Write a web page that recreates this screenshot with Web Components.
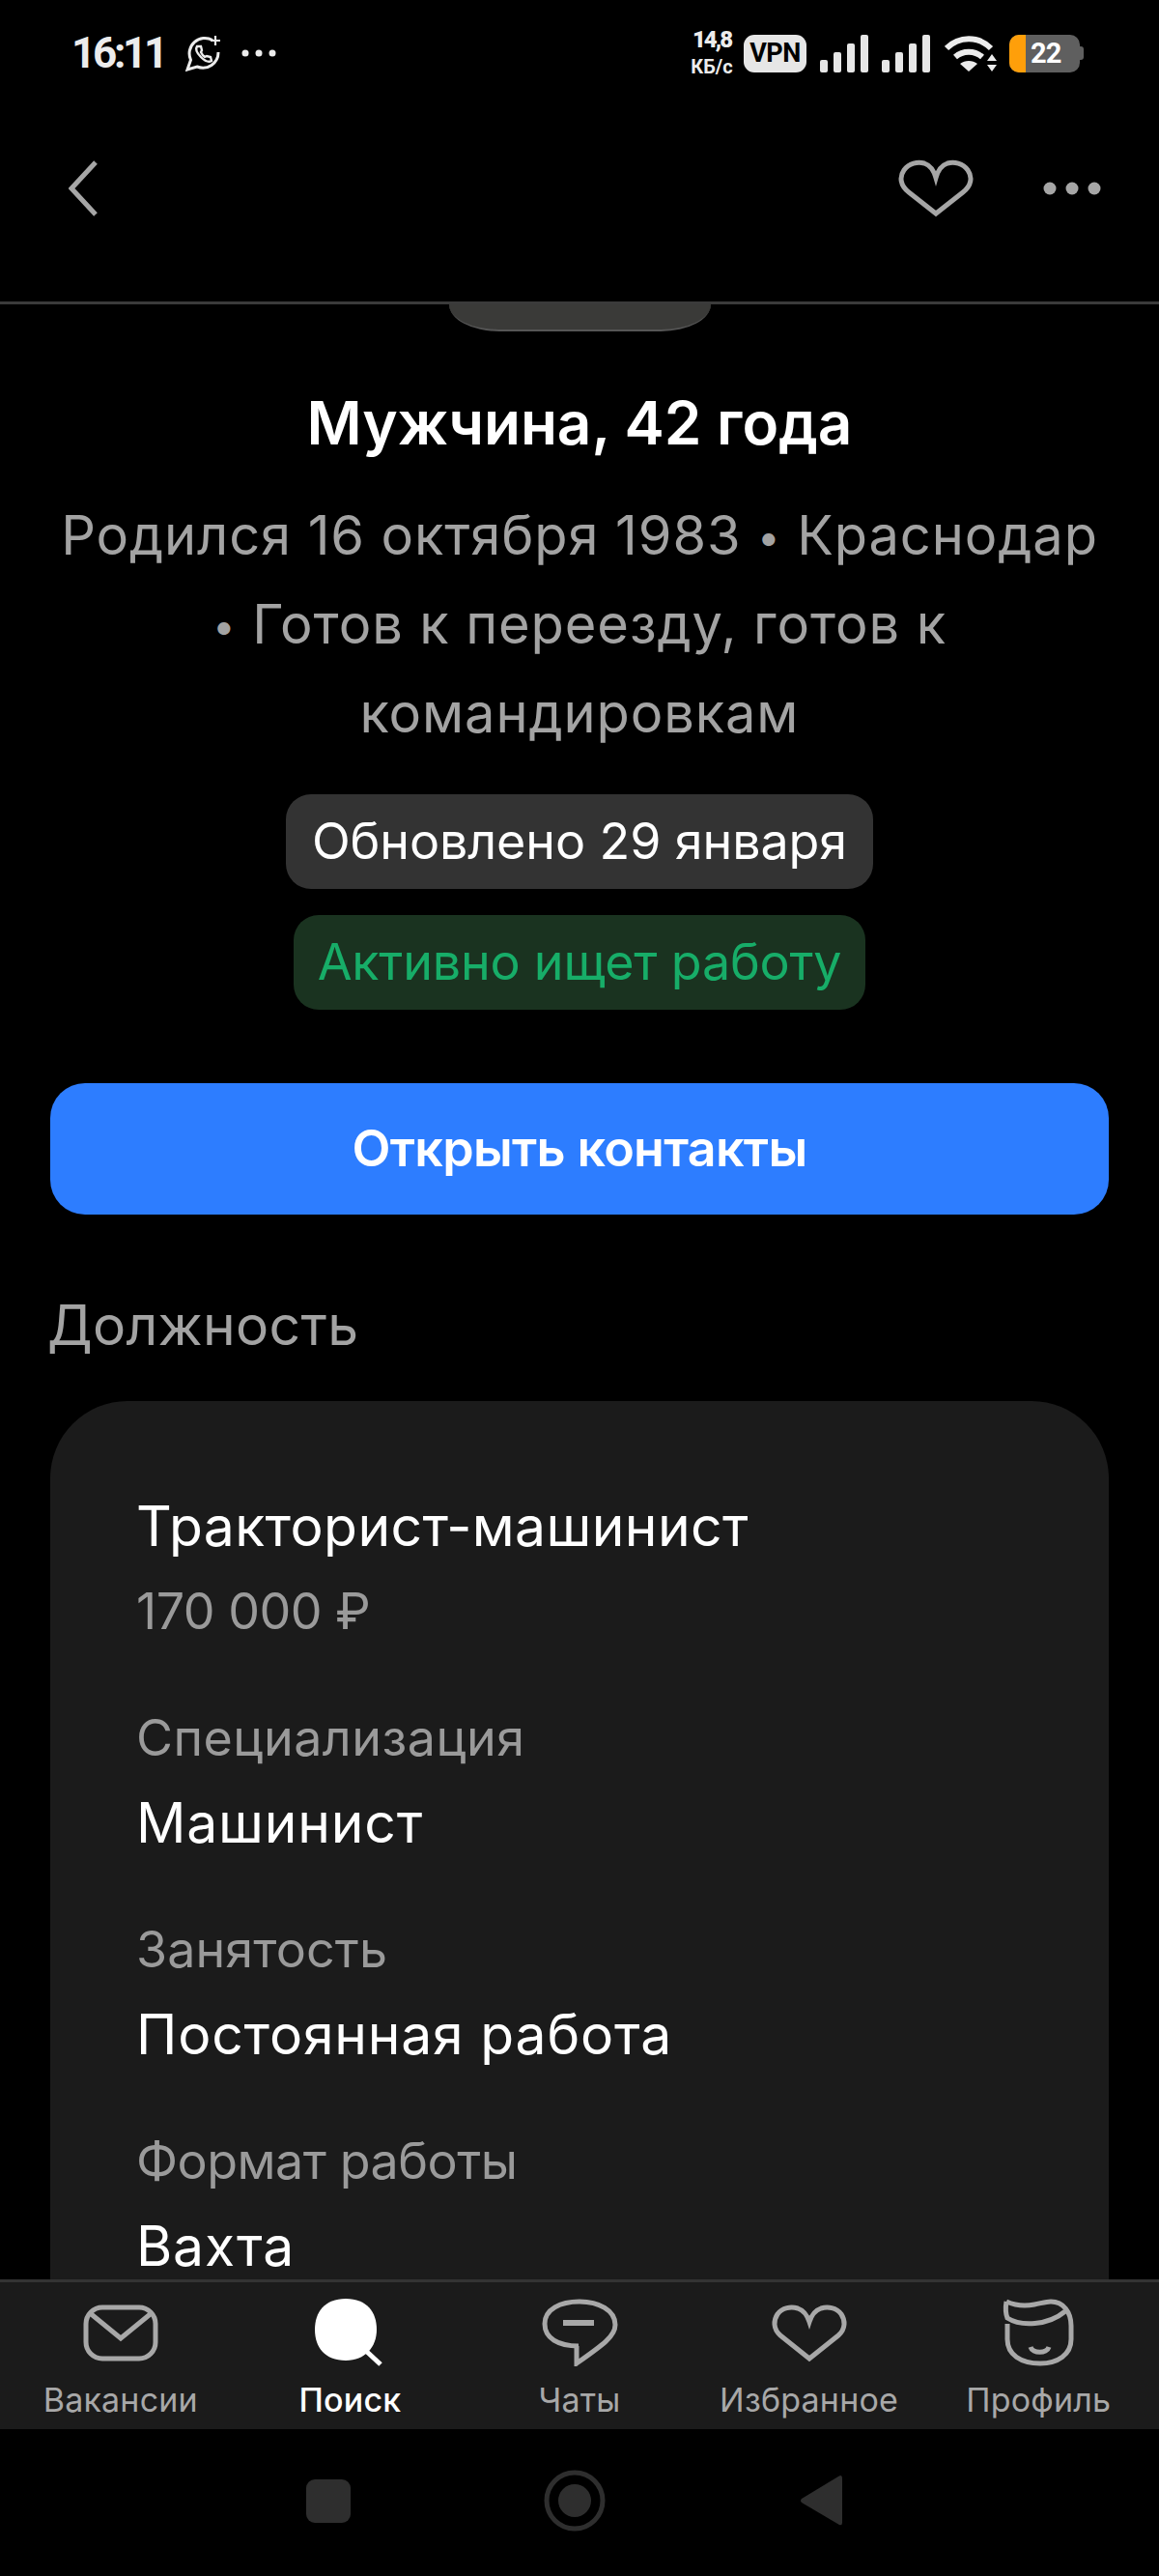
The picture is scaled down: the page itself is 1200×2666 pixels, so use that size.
<!DOCTYPE html>
<html lang="ru">
<head>
<meta charset="utf-8">
<title>Резюме</title>
<style>
html, body { margin: 0; background: #000; }
body { width: 1200px; height: 2666px; overflow: hidden; display: flex; flex-direction: column; font-family: Inter, "Noto Sans", sans-serif; color: #fff; }
.dot { font-size: 42px; vertical-align: 3px; }
</style>
</head>
<body>
<status-bar></status-bar>
<top-bar></top-bar>
<resume-view>
  <h-title>Мужчина, 42 года</h-title>
  <sub-text>Родился 16 октября 1983 <span class="dot">•</span> Краснодар<br><span class="dot">•</span> Готов к переезду, готов к<br>командировкам</sub-text>
  <tag-chip>Обновлено 29 января</tag-chip>
  <tag-chip kind="green">Активно ищет работу</tag-chip>
  <main-button>Открыть контакты</main-button>
  <section-card heading="Должность">
    <info-row first label="Тракторист-машинист" value="170 000 ₽"></info-row>
    <info-row style="--label-ls:.5px" label="Специализация" value="Машинист"></info-row>
    <info-row label="Занятость" value="Постоянная работа"></info-row>
    <info-row style="--label-ls:-.5px" label="Формат работы" value="Вахта"></info-row>
  </section-card>
</resume-view>
<tab-bar>
  <tab-item label="Вакансии" icon="mail"></tab-item>
  <tab-item label="Поиск" icon="search" active></tab-item>
  <tab-item label="Чаты" icon="chat"></tab-item>
  <tab-item label="Избранное" icon="heart"></tab-item>
  <tab-item label="Профиль" icon="face"></tab-item>
</tab-bar>
<system-nav></system-nav>

<script>
const SIGNAL_BARS = `<rect x="0" y="26" width="8" height="13" rx="2"/><rect x="14" y="18" width="8" height="21" rx="2"/><rect x="28" y="9" width="8" height="30" rx="2"/><rect x="42" y="0" width="8" height="39" rx="2"/>`;

class StatusBar extends HTMLElement {
    constructor() {
        super();
        this.attachShadow({ mode: 'open' });
        this.shadowRoot.innerHTML = `
            <style>
                :host { display: flex; align-items: center; height: 110px; padding: 0 78px 0 74px; color: #ececec; font-family: Roboto, sans-serif; flex: none; }
                .time { font-size: 44px; font-weight: 700; letter-spacing: -3.3px; width: 118px; }
                .speed { margin-left: auto; width: 46px; text-align: center; font-size: 20px; font-weight: 700; line-height: 27px; margin-right: 10px; white-space: nowrap; }
                .speed b { font-size: 24px; letter-spacing: -2px; }
                .vpn { width: 65px; height: 39px; border-radius: 11px; background: #e6e6e6; color: #000; font-size: 27px; font-weight: 700; display: flex; align-items: center; justify-content: center; letter-spacing: -.5px; margin-right: 14px; }
                .batt { position: relative; width: 73px; height: 39px; border-radius: 10px; background: #5f5f5f; overflow: hidden; display: flex; align-items: center; font-size: 29px; font-weight: 700; color: #fff; letter-spacing: -1px; }
                .batt i { width: 17px; align-self: stretch; background: #ff9f0a; margin-right: 5px; }
                .nub { width: 4px; height: 14px; background: #5f5f5f; border-radius: 0 3px 3px 0; }
                svg { display: block; flex: none; }
            </style>
            <span class="time">16:11</span>
            <svg width="38" height="38" viewBox="0 0 38 38" fill="none" stroke="#ececec" stroke-width="3">
                <path d="M28 5.5A16 16 0 0 0 5.5 26L2 36l10-3A16 16 0 0 0 34 18"/>
                <path d="M12 12c-2 3 0 7 4 11s8 6 11 4l-1-4-4-1-2 1c-2-1-3-3-4-5l1-2-1-4z" stroke-width="2.4"/>
                <path d="M31 1v10M26 6h10" stroke-width="2.2"/>
            </svg>
            <svg style="margin-left:20px" width="36" height="8" viewBox="0 0 36 8" fill="#ececec"><circle cx="4" cy="4" r="3.5"/><circle cx="18" cy="4" r="3.5"/><circle cx="32" cy="4" r="3.5"/></svg>
            <div class="speed"><b>14,8</b><br>КБ/с</div>
            <div class="vpn">VPN</div>
            <svg width="50" height="39" viewBox="0 0 50 39" fill="#e6e6e6">${SIGNAL_BARS}</svg>
            <svg style="margin-left:14px" width="50" height="39" viewBox="0 0 50 39" fill="#e6e6e6">${SIGNAL_BARS}</svg>
            <svg style="margin:0 13px 0 15px" width="54" height="39" viewBox="0 0 54 39" fill="none" stroke="#ececec" stroke-width="6">
                <path d="M2 14C15 1 35 1 48 14"/><path d="M11 23c8-7 20-7 28 0"/>
                <path d="M25 38l-9-8c5-4 13-4 18 0z" fill="#ececec" stroke="none"/>
                <path d="M49 20l5 7H44zM49 38l5-7H44z" fill="#ececec" stroke="none"/>
            </svg>
            <div class="batt"><i></i>22</div><div class="nub"></div>
        `;
    }
}

class TopBar extends HTMLElement {
    constructor() {
        super();
        this.attachShadow({ mode: 'open' });
        this.shadowRoot.innerHTML = `
            <style>
                :host { display: flex; align-items: center; height: 169px; border-bottom: 3px solid #3b3b3b; padding: 0 60px 33px 71px; flex: none; }
                svg { display: block; }
                .back { margin-right: auto; }
            </style>
            <svg class="back" width="30" height="58" viewBox="0 0 30 58" fill="none" stroke="#a6a6a6" stroke-width="5"><path d="M28 2L3 29l25 27"/></svg>
            <svg width="80" height="60" viewBox="0 0 80 60" fill="none" stroke="#a6a6a6" stroke-width="5"><path d="M40 56L12 34C3 27 2 18 7 11 12 4 21 2 28 4 34 6 38 12 40 19 42 12 46 6 52 4 59 2 68 4 73 11 78 18 77 27 68 34Z"/></svg>
            <svg style="margin-left:71px" width="60" height="14" viewBox="0 0 60 14" fill="#a6a6a6"><circle cx="7" cy="7" r="6.5"/><circle cx="30" cy="7" r="6.5"/><circle cx="53" cy="7" r="6.5"/></svg>
        `;
    }
}

class ResumeView extends HTMLElement {
    constructor() {
        super();
        this.attachShadow({ mode: 'open' });
        this.shadowRoot.innerHTML = `
            <style>
                :host { display: flex; flex-direction: column; align-items: center; flex: 1 1 0; min-height: 0; overflow: hidden; }
                .stub { flex: none; box-sizing: border-box; width: 271px; height: 28px; background: #3a3a38; border-bottom: 2px solid #555; border-radius: 0 0 52px 52px / 0 0 28px 28px; }
            </style>
            <div class="stub"></div>
            <slot></slot>
        `;
    }
}

class HTitle extends HTMLElement {
    constructor() {
        super();
        this.attachShadow({ mode: 'open' });
        this.shadowRoot.innerHTML = `
            <style>
                :host { display: block; flex: none; margin-top: 57px; font-size: 62px; line-height: 76px; font-weight: 600; color: #fff; text-align: center; }
            </style>
            <slot></slot>
        `;
    }
}

class SubText extends HTMLElement {
    constructor() {
        super();
        this.attachShadow({ mode: 'open' });
        this.shadowRoot.innerHTML = `
            <style>
                :host { display: block; flex: none; margin-top: 33px; margin-bottom: 11px; font-size: 56px; line-height: 91px; color: #a3a3a3; text-align: center; letter-spacing: .9px; white-space: nowrap; }
            </style>
            <slot></slot>
        `;
    }
}

class TagChip extends HTMLElement {
    constructor() {
        super();
        this.attachShadow({ mode: 'open' });
        this.shadowRoot.innerHTML = `
            <style>
                :host { display: block; flex: none; margin-top: 27px; padding: 0 27px; height: 98px; line-height: 98px; border-radius: 26px; background: #333; color: #fff; font-size: 52px; letter-spacing: -.1px; white-space: nowrap; }
                :host([kind="green"]) { background: #1a3320; color: #17ad68; padding: 0 25px; letter-spacing: -.2px; }
            </style>
            <slot></slot>
        `;
    }
}

class MainButton extends HTMLElement {
    constructor() {
        super();
        this.attachShadow({ mode: 'open' });
        this.shadowRoot.innerHTML = `
            <style>
                :host { display: block; flex: none; box-sizing: border-box; width: 1096px; margin-top: 76px; height: 136px; line-height: 136px; border-radius: 36px; background: #2d7dff; color: #fff; text-align: center; font-size: 52px; font-weight: 600; letter-spacing: -.7px; }
            </style>
            <slot></slot>
        `;
    }
}

class SectionCard extends HTMLElement {
    constructor() {
        super();
        this.attachShadow({ mode: 'open' });
        this.shadowRoot.innerHTML = `
            <style>
                :host { display: block; flex: none; width: 1096px; margin-top: 81px; }
                h2 { margin: 0 0 44px -3px; font-size: 57px; line-height: 68px; font-weight: 400; color: #a3a3a3; letter-spacing: .3px; }
                .card { background: #1b1b1b; border-radius: 80px; padding: 97px 90px 110px 89px; }
            </style>
            <h2></h2>
            <div class="card"><slot></slot></div>
        `;
    }
    connectedCallback() {
        this.shadowRoot.querySelector('h2').textContent = this.getAttribute('heading');
    }
}

class InfoRow extends HTMLElement {
    constructor() {
        super();
        this.attachShadow({ mode: 'open' });
        this.shadowRoot.innerHTML = `
            <style>
                :host { display: block; margin-top: 65px; }
                :host([first]) { margin-top: 0; }
                .label { font-size: 52px; line-height: 66px; margin-bottom: 22px; color: #9a9a9a; letter-spacing: var(--label-ls, .1px); }
                .value { font-size: 57px; line-height: 66px; color: #fff; letter-spacing: .8px; }
                :host([first]) .label { font-size: 57px; color: #fff; letter-spacing: .4px; }
                :host([first]) .value { font-size: 52px; color: #9a9a9a; letter-spacing: -.5px; }
            </style>
            <div class="label"></div>
            <div class="value"></div>
        `;
    }
    connectedCallback() {
        this.shadowRoot.querySelector('.label').textContent = this.getAttribute('label');
        this.shadowRoot.querySelector('.value').textContent = this.getAttribute('value');
    }
}

class TabBar extends HTMLElement {
    constructor() {
        super();
        this.attachShadow({ mode: 'open' });
        this.shadowRoot.innerHTML = `
            <style>
                :host { display: grid; grid-template-columns: repeat(5, 1fr); flex: none; box-sizing: border-box; height: 155px; padding: 0 6px; background: #1b1b1b; border-top: 3px solid #333; }
            </style>
            <slot></slot>
        `;
    }
}

const TAB_ICONS = {
    mail: `<rect x="6" y="9" width="72" height="53" rx="17"/><path d="M9 14l33 27 33-27"/>`,
    search: `<path d="M38 0C60 0 70 14 70 32 70 50 58 64 38 64 16 64 6 50 6 32 6 14 16 0 38 0Z" fill="#fff" stroke="none"/><path d="M60 55l14 13" stroke="#fff"/>`,
    chat: `<path d="M41 49C20 49 6 41 6 26 6 11 22 3 42 3 62 3 79 12 79 27 79 39 66 48 39 67V49Z"/><path d="M25 25h32" stroke-width="6"/>`,
    heart: `<path d="M42 62L12 38C4 31 5 22 9 16 14 9 23 8 30 10 36 12 40 18 42 24 44 18 48 12 54 10 61 8 70 9 75 16 79 22 80 31 72 38Z"/>`,
    face: `<path d="M9 3C18 7 28 8 38 6 44 5 50 3 55 3 68 3 76 14 76 28V42C76 58 62 67 44 67 24 67 10 58 10 42V26"/><path d="M9 3C8 9 8 15 10 20 24 29 52 28 70 13"/><path d="M34 50C36 57 51 57 53 50"/>`
};

class TabItem extends HTMLElement {
    constructor() {
        super();
        this.attachShadow({ mode: 'open' });
        this.shadowRoot.innerHTML = `
            <style>
                :host { display: flex; flex-direction: column; align-items: center; padding-top: 17px; font-family: Inter, sans-serif; font-size: 34px; line-height: 40px; color: #a8a8a8; letter-spacing: .2px; white-space: nowrap; }
                :host([active]) { color: #fff; font-weight: 500; }
                svg { display: block; margin-bottom: 15px; }
            </style>
            <svg width="84" height="70" viewBox="0 0 84 70" fill="none" stroke="#a8a8a8" stroke-width="5"></svg>
            <span></span>
        `;
    }
    connectedCallback() {
        this.shadowRoot.querySelector('svg').innerHTML = TAB_ICONS[this.getAttribute('icon')];
        this.shadowRoot.querySelector('span').textContent = this.getAttribute('label');
    }
}

class SystemNav extends HTMLElement {
    constructor() {
        super();
        this.attachShadow({ mode: 'open' });
        this.shadowRoot.innerHTML = `
            <style>
                :host { display: grid; grid-template-columns: repeat(3, 255px); justify-content: center; justify-items: center; align-items: center; flex: none; height: 152px; background: #000; padding-right: 11px; padding-bottom: 4px; box-sizing: border-box; }
                .sq { width: 46px; height: 45px; border-radius: 9px; background: #2e2e2e; }
            </style>
            <div class="sq"></div>
            <svg width="64" height="64" viewBox="0 0 64 64" fill="#2e2e2e"><circle cx="32" cy="32" r="29" fill="none" stroke="#2e2e2e" stroke-width="5"/><circle cx="32" cy="32" r="17"/></svg>
            <svg width="44" height="52" viewBox="0 0 44 52" fill="#2e2e2e"><path d="M42 0Q44 0 44 3V49Q44 52 41 51L2 28Q0 26 2 24L40 1Z"/></svg>
        `;
    }
}

customElements.define('status-bar', StatusBar);
customElements.define('top-bar', TopBar);
customElements.define('resume-view', ResumeView);
customElements.define('h-title', HTitle);
customElements.define('sub-text', SubText);
customElements.define('tag-chip', TagChip);
customElements.define('main-button', MainButton);
customElements.define('section-card', SectionCard);
customElements.define('info-row', InfoRow);
customElements.define('tab-bar', TabBar);
customElements.define('tab-item', TabItem);
customElements.define('system-nav', SystemNav);
</script>
</body>
</html>
